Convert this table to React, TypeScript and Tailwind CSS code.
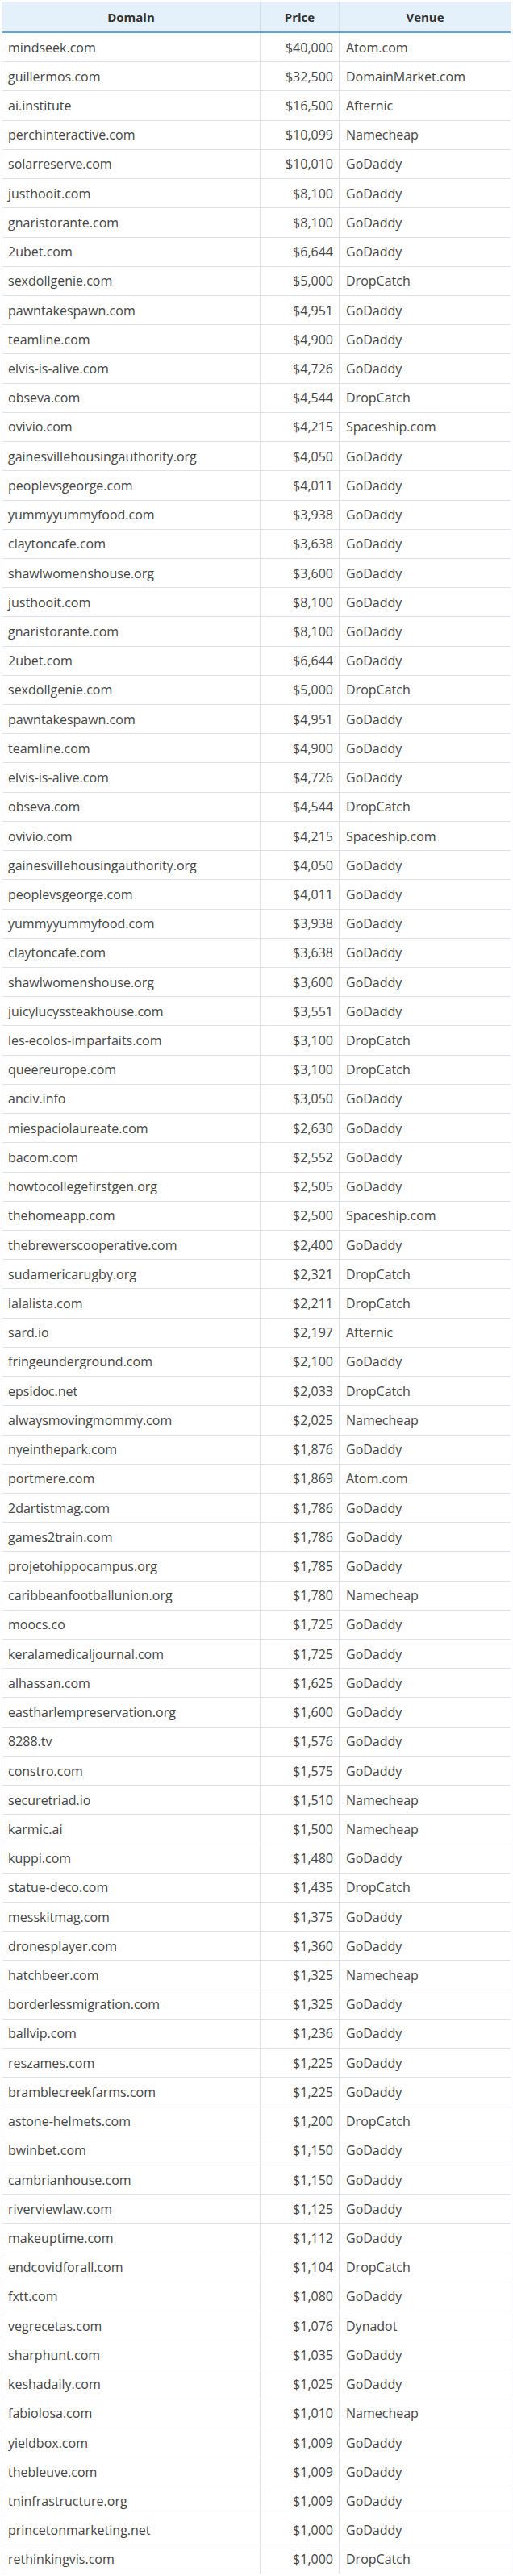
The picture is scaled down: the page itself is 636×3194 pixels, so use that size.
const rows: [string, string, string][] = [
  ["mindseek.com", "$40,000", "Atom.com"],
  ["guillermos.com", "$32,500", "DomainMarket.com"],
  ["ai.institute", "$16,500", "Afternic"],
  ["perchinteractive.com", "$10,099", "Namecheap"],
  ["solarreserve.com", "$10,010", "GoDaddy"],
  ["justhooit.com", "$8,100", "GoDaddy"],
  ["gnaristorante.com", "$8,100", "GoDaddy"],
  ["2ubet.com", "$6,644", "GoDaddy"],
  ["sexdollgenie.com", "$5,000", "DropCatch"],
  ["pawntakespawn.com", "$4,951", "GoDaddy"],
  ["teamline.com", "$4,900", "GoDaddy"],
  ["elvis-is-alive.com", "$4,726", "GoDaddy"],
  ["obseva.com", "$4,544", "DropCatch"],
  ["ovivio.com", "$4,215", "Spaceship.com"],
  ["gainesvillehousingauthority.org", "$4,050", "GoDaddy"],
  ["peoplevsgeorge.com", "$4,011", "GoDaddy"],
  ["yummyyummyfood.com", "$3,938", "GoDaddy"],
  ["claytoncafe.com", "$3,638", "GoDaddy"],
  ["shawlwomenshouse.org", "$3,600", "GoDaddy"],
  ["justhooit.com", "$8,100", "GoDaddy"],
  ["gnaristorante.com", "$8,100", "GoDaddy"],
  ["2ubet.com", "$6,644", "GoDaddy"],
  ["sexdollgenie.com", "$5,000", "DropCatch"],
  ["pawntakespawn.com", "$4,951", "GoDaddy"],
  ["teamline.com", "$4,900", "GoDaddy"],
  ["elvis-is-alive.com", "$4,726", "GoDaddy"],
  ["obseva.com", "$4,544", "DropCatch"],
  ["ovivio.com", "$4,215", "Spaceship.com"],
  ["gainesvillehousingauthority.org", "$4,050", "GoDaddy"],
  ["peoplevsgeorge.com", "$4,011", "GoDaddy"],
  ["yummyyummyfood.com", "$3,938", "GoDaddy"],
  ["claytoncafe.com", "$3,638", "GoDaddy"],
  ["shawlwomenshouse.org", "$3,600", "GoDaddy"],
  ["juicylucyssteakhouse.com", "$3,551", "GoDaddy"],
  ["les-ecolos-imparfaits.com", "$3,100", "DropCatch"],
  ["queereurope.com", "$3,100", "DropCatch"],
  ["anciv.info", "$3,050", "GoDaddy"],
  ["miespaciolaureate.com", "$2,630", "GoDaddy"],
  ["bacom.com", "$2,552", "GoDaddy"],
  ["howtocollegefirstgen.org", "$2,505", "GoDaddy"],
  ["thehomeapp.com", "$2,500", "Spaceship.com"],
  ["thebrewerscooperative.com", "$2,400", "GoDaddy"],
  ["sudamericarugby.org", "$2,321", "DropCatch"],
  ["lalalista.com", "$2,211", "DropCatch"],
  ["sard.io", "$2,197", "Afternic"],
  ["fringeunderground.com", "$2,100", "GoDaddy"],
  ["epsidoc.net", "$2,033", "DropCatch"],
  ["alwaysmovingmommy.com", "$2,025", "Namecheap"],
  ["nyeinthepark.com", "$1,876", "GoDaddy"],
  ["portmere.com", "$1,869", "Atom.com"],
  ["2dartistmag.com", "$1,786", "GoDaddy"],
  ["games2train.com", "$1,786", "GoDaddy"],
  ["projetohippocampus.org", "$1,785", "GoDaddy"],
  ["caribbeanfootballunion.org", "$1,780", "Namecheap"],
  ["moocs.co", "$1,725", "GoDaddy"],
  ["keralamedicaljournal.com", "$1,725", "GoDaddy"],
  ["alhassan.com", "$1,625", "GoDaddy"],
  ["eastharlempreservation.org", "$1,600", "GoDaddy"],
  ["8288.tv", "$1,576", "GoDaddy"],
  ["constro.com", "$1,575", "GoDaddy"],
  ["securetriad.io", "$1,510", "Namecheap"],
  ["karmic.ai", "$1,500", "Namecheap"],
  ["kuppi.com", "$1,480", "GoDaddy"],
  ["statue-deco.com", "$1,435", "DropCatch"],
  ["messkitmag.com", "$1,375", "GoDaddy"],
  ["dronesplayer.com", "$1,360", "GoDaddy"],
  ["hatchbeer.com", "$1,325", "Namecheap"],
  ["borderlessmigration.com", "$1,325", "GoDaddy"],
  ["ballvip.com", "$1,236", "GoDaddy"],
  ["reszames.com", "$1,225", "GoDaddy"],
  ["bramblecreekfarms.com", "$1,225", "GoDaddy"],
  ["astone-helmets.com", "$1,200", "DropCatch"],
  ["bwinbet.com", "$1,150", "GoDaddy"],
  ["cambrianhouse.com", "$1,150", "GoDaddy"],
  ["riverviewlaw.com", "$1,125", "GoDaddy"],
  ["makeuptime.com", "$1,112", "GoDaddy"],
  ["endcovidforall.com", "$1,104", "DropCatch"],
  ["fxtt.com", "$1,080", "GoDaddy"],
  ["vegrecetas.com", "$1,076", "Dynadot"],
  ["sharphunt.com", "$1,035", "GoDaddy"],
  ["keshadaily.com", "$1,025", "GoDaddy"],
  ["fabiolosa.com", "$1,010", "Namecheap"],
  ["yieldbox.com", "$1,009", "GoDaddy"],
  ["thebleuve.com", "$1,009", "GoDaddy"],
  ["tninfrastructure.org", "$1,009", "GoDaddy"],
  ["princetonmarketing.net", "$1,000", "GoDaddy"],
  ["rethinkingvis.com", "$1,000", "DropCatch"],
];

export default function App() {
  return (
    <div className="bg-white pt-[2px] px-[2px] font-['Open_Sans',sans-serif]">
      <div className="border-x border-t border-[#dce2e7]">
        {/* header */}
        <div className="grid h-[38px] grid-cols-[320px_98px_1fr] border-b-2 border-[#5aa6da] bg-[#e4f1fb] text-[15px] font-bold text-[#333]">
          <div className="flex items-center justify-center border-r border-[#cfdfec]">Domain</div>
          <div className="flex items-center justify-center border-r border-[#cfdfec]">Price</div>
          <div className="flex items-center justify-center">Venue</div>
        </div>

        {rows.map(([domain, price, venue], i) => (
          <div
            key={i}
            className="grid h-[36.23px] grid-cols-[320px_98px_1fr] border-b border-[#dce2e7] text-[16px] text-[#444]"
          >
            <div className="flex items-center border-r border-[#dce2e7] px-[7px] whitespace-nowrap">{domain}</div>
            <div className="flex items-center justify-end border-r border-[#dce2e7] px-[7px]">{price}</div>
            <div className="flex items-center px-[8px]">{venue}</div>
          </div>
        ))}
      </div>
    </div>
  );
}
